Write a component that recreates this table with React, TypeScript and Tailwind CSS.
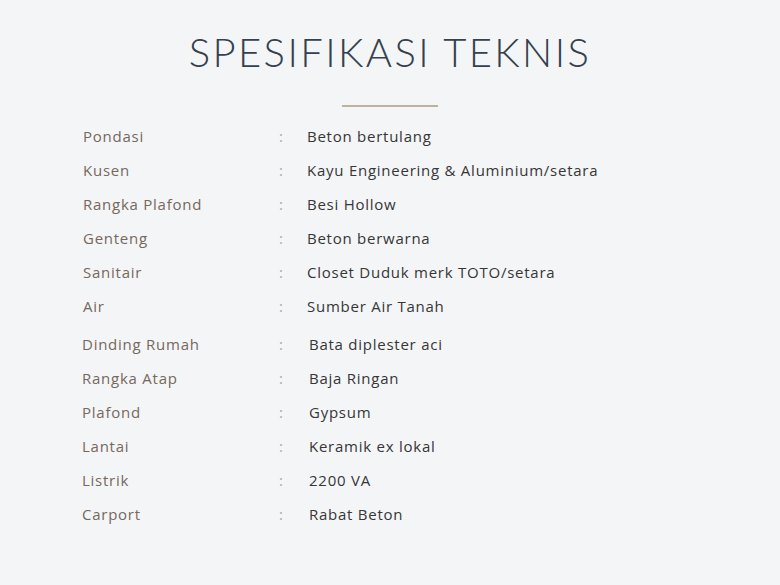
const groupA = [
  ['Pondasi', 'Beton bertulang'],
  ['Kusen', 'Kayu Engineering & Aluminium/setara'],
  ['Rangka Plafond', 'Besi Hollow'],
  ['Genteng', 'Beton berwarna'],
  ['Sanitair', 'Closet Duduk merk TOTO/setara'],
  ['Air', 'Sumber Air Tanah'],
]

const groupB = [
  ['Dinding Rumah', 'Bata diplester aci'],
  ['Rangka Atap', 'Baja Ringan'],
  ['Plafond', 'Gypsum'],
  ['Lantai', 'Keramik ex lokal'],
  ['Listrik', '2200 VA'],
  ['Carport', 'Rabat Beton'],
]

function SpecTable({ rows, shift }: { rows: string[][]; shift?: boolean }) {
  return (
    <div className={shift ? 'pl-[82px]' : 'pl-[83px]'}>
      {rows.map(([label, value]) => (
        <div
          key={label}
          className="flex items-center h-[34px] text-[15px] tracking-[0.75px]"
          style={{ fontFamily: '"Open Sans", Lato, sans-serif' }}
        >
          <div className={shift ? 'w-[197px] text-[#76685d]' : 'w-[196px] text-[#76685d]'}>{label}</div>
          <div className={shift ? 'w-[30px] text-[#a9a9a9]' : 'w-[28px] text-[#a9a9a9]'}>:</div>
          <div className="text-[#363636]">{value}</div>
        </div>
      ))}
    </div>
  )
}

export default function App() {
  return (
    <div
      className="w-[780px] h-[585px] bg-[#f4f5f7] overflow-hidden"
      style={{ fontFamily: 'Lato, "Open Sans", sans-serif' }}
    >
      <h1 className="pt-[28px] text-center text-[40px] font-light tracking-[2.4px] text-[#34414c] leading-[48px]">
        SPESIFIKASI TEKNIS
      </h1>
      <div className="mx-auto mt-[29px] w-[96px] h-[2px] bg-[#bdb29c]" />
      <div className="mt-[12px]">
        <SpecTable rows={groupA} />
      </div>
      <div className="mt-[4px]">
        <SpecTable rows={groupB} shift />
      </div>
    </div>
  )
}
